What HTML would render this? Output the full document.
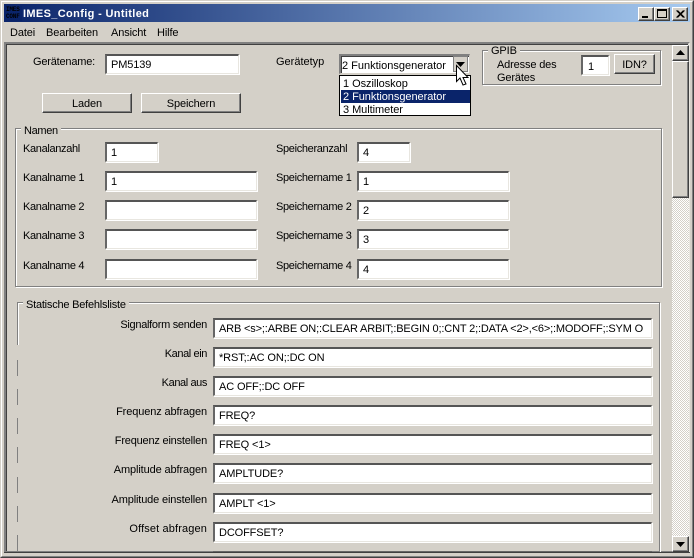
<!DOCTYPE html>
<html><head><meta charset="utf-8"><style>
html,body{margin:0;padding:0;background:#d4d0c8}
body{width:694px;height:558px;position:relative;overflow:hidden;font:11px "Liberation Sans",sans-serif;color:#000;letter-spacing:-.12px}
div{position:absolute;box-sizing:border-box;white-space:nowrap}
.l{height:14px;line-height:14px}
.n{letter-spacing:-.33px}
.r{text-align:right;width:200px;left:7px}
.i{background:#fff;height:20px;border-style:solid;border-width:2px 1px 1px 2px;border-color:#555 #e8e6e0 #e8e6e0 #666;box-shadow:1px 1px 0 #fff;padding:2px 0 0 4px;line-height:15px;overflow:hidden}
.b{background:#d4d0c8;height:20px;border:1px solid;border-color:#fff #404040 #404040 #fff;box-shadow:inset -1px -1px 0 #808080;text-align:center;line-height:20px}
.g{border:1px solid #808080;box-shadow:1px 1px 0 #fff,inset 1px 1px 0 #fff}
.t{background:#d4d0c8;padding:0 3px;height:12px;line-height:12px}
.w{width:16px;height:14px;top:7px;background:#d4d0c8;border:1px solid;border-color:#fff #404040 #404040 #fff;box-shadow:inset -1px -1px 0 #808080}
.d{left:17px;width:1px;background:#808080}
.d2{left:18px;width:1px;background:#fff}
.o{left:1px;width:129px;height:13px;line-height:14px;padding-left:2px;letter-spacing:-.05px}
</style></head><body>
<div style="left:0;top:0;width:694px;height:558px;border:1px solid;border-color:#d4d0c8 #404040 #404040 #d4d0c8"></div>
<div style="left:1px;top:1px;width:692px;height:556px;border:1px solid;border-color:#fff #808080 #808080 #fff"></div>
<div style="left:4px;top:4px;width:686px;height:18px;background:linear-gradient(90deg,#0a246a,#a6caf0)"></div>
<div style="left:6px;top:6px;width:16px;height:15px;background:#0a246a;color:#000;font:bold 6px/7px 'Liberation Mono',monospace;letter-spacing:-.2px">IMES<br>CONF</div>
<div class="l" style="left:23px;top:7px;color:#fff;font-weight:bold;font-size:11px;letter-spacing:.35px">IMES_Config - Untitled</div>
<div class="w" style="left:638px"><div style="left:3px;top:8px;width:6px;height:2px;background:#000"></div></div>
<div class="w" style="left:654px"><div style="left:2px;top:1px;width:10px;height:9px;border:1px solid #000;border-top-width:2px"></div></div>
<div class="w" style="left:672px;width:16px"><svg style="position:absolute;left:3px;top:2px" width="9" height="8"><path d="M0.5 0.5L7.5 7.5M1.5 0.5L8.5 7.5M7.5 0.5L0.5 7.5M8.5 0.5L1.500 7.5" stroke="#000" fill="none"/></svg></div>
<div class="l" style="left:10px;top:26px">Datei</div>
<div class="l" style="left:46px;top:26px">Bearbeiten</div>
<div class="l" style="left:111px;top:26px">Ansicht</div>
<div class="l" style="left:157px;top:26px">Hilfe</div>
<div style="left:4px;top:42px;width:686px;height:511px;border:2px solid;border-color:#808080 #e8e6e0 #808080 #808080;box-shadow:inset 1px 1px 0 #404040"></div>
<div style="left:4px;top:552px;width:686px;height:1px;background:#404040"></div>

<div class="l" style="left:33px;top:55px;letter-spacing:-.2px">Gerätename:</div>
<div class="i" style="left:105px;top:54px;width:134px">PM5139</div>
<div class="b" style="left:42px;top:93px;width:90px">Laden</div>
<div class="b" style="left:141px;top:93px;width:100px">Speichern</div>
<div class="l" style="left:276px;top:55px;letter-spacing:0">Gerätetyp</div>

<div class="i" style="left:339px;top:54px;width:131px;padding:3px 0 0 1px;border-color:#808080 #d4d0c8 #d4d0c8 #808080;box-shadow:inset 1px 1px 0 #404040;letter-spacing:0">2 Funktionsgenerator</div>
<div class="b" style="left:453px;top:56px;width:15px;height:16px;border-color:#808080;box-shadow:none"></div>
<svg style="position:absolute;left:456px;top:62px" width="9" height="5"><path d="M0 0H9L4.500 5Z" fill="#000"/></svg>
<div style="left:339px;top:75px;width:132px;height:41px;background:#fff;border:1px solid #000">
<div class="o" style="top:1px">1 Oszilloskop</div>
<div class="o" style="top:14px;background:#0a246a;color:#fff">2 Funktionsgenerator</div>
<div class="o" style="top:27px">3 Multimeter</div>
</div>
<svg style="position:absolute;left:455px;top:64px" width="14" height="23"><path d="M1.500 1.500V17.500L5 14L8 21L11 20L8 13.500H13Z" fill="#fff" stroke="#000"/></svg>

<div class="g" style="left:482px;top:50px;width:179px;height:35px"></div>
<div class="t" style="left:488px;top:45px">GPIB</div>
<div class="l" style="left:497px;top:58px;letter-spacing:-.15px">Adresse des</div>
<div class="l" style="left:497px;top:71px;letter-spacing:-.15px">Gerätes</div>
<div class="i" style="left:581px;top:55px;width:28px;padding-top:3px;padding-left:5px">1</div>
<div class="b" style="left:614px;top:54px;width:41px">IDN?</div>

<div class="g" style="left:15px;top:128px;width:647px;height:159px"></div>
<div class="t n" style="left:21px;top:125px">Namen</div>
<div class="l n" style="left:23px;top:142px">Kanalanzahl</div>
<div class="i" style="left:105px;top:142px;width:53px">1</div>
<div class="l n" style="left:23px;top:171px">Kanalname 1</div>
<div class="i" style="left:105px;top:171px;width:152px">1</div>
<div class="l n" style="left:23px;top:200px">Kanalname 2</div>
<div class="i" style="left:105px;top:200px;width:152px"></div>
<div class="l n" style="left:23px;top:229px">Kanalname 3</div>
<div class="i" style="left:105px;top:229px;width:152px"></div>
<div class="l n" style="left:23px;top:259px">Kanalname 4</div>
<div class="i" style="left:105px;top:259px;width:152px"></div>
<div class="l n" style="left:276px;top:142px">Speicheranzahl</div>
<div class="i" style="left:357px;top:142px;width:53px">4</div>
<div class="l n" style="left:276px;top:171px">Speichername 1</div>
<div class="i" style="left:357px;top:171px;width:152px">1</div>
<div class="l n" style="left:276px;top:200px">Speichername 2</div>
<div class="i" style="left:357px;top:200px;width:152px">2</div>
<div class="l n" style="left:276px;top:229px">Speichername 3</div>
<div class="i" style="left:357px;top:229px;width:152px">3</div>
<div class="l n" style="left:276px;top:259px">Speichername 4</div>
<div class="i" style="left:357px;top:259px;width:152px">4</div>

<div style="left:17px;top:302px;width:643px;height:250px;border-top:1px solid #808080;border-right:1px solid #808080;box-shadow:inset 0 1px 0 #fff;"></div>
<div style="left:660px;top:303px;width:1px;height:249px;background:#fff"></div>
<div class="d" style="top:302px;height:43px"></div><div class="d2" style="top:303px;height:42px"></div>
<div class="d" style="top:360px;height:16px"></div><div class="d" style="top:389px;height:16px"></div>
<div class="d" style="top:418px;height:16px"></div><div class="d" style="top:447px;height:16px"></div>
<div class="d" style="top:477px;height:16px"></div><div class="d" style="top:506px;height:16px"></div>
<div class="d" style="top:535px;height:16px"></div>
<div class="t" style="left:23px;top:299px;letter-spacing:-.22px">Statische Befehlsliste</div>
<div class="l r" style="top:318px;letter-spacing:-.3px">Signalform senden</div>
<div class="i" style="left:213px;top:318px;width:439px;letter-spacing:-.16px">ARB &lt;s&gt;;:ARBE ON;:CLEAR ARBIT;:BEGIN 0;:CNT 2;:DATA &lt;2&gt;,&lt;6&gt;;:MODOFF;:SYM O</div>
<div class="l r" style="top:347px;letter-spacing:-.4px">Kanal ein</div>
<div class="i" style="left:213px;top:347px;width:439px">*RST;:AC ON;:DC ON</div>
<div class="l r" style="top:376px;letter-spacing:-.4px">Kanal aus</div>
<div class="i" style="left:213px;top:376px;width:439px">AC OFF;:DC OFF</div>
<div class="l r" style="top:405px">Frequenz abfragen</div>
<div class="i" style="left:213px;top:405px;width:439px">FREQ?</div>
<div class="l r" style="top:434px;letter-spacing:-.2px">Frequenz einstellen</div>
<div class="i" style="left:213px;top:434px;width:439px">FREQ &lt;1&gt;</div>
<div class="l r" style="top:463px">Amplitude abfragen</div>
<div class="i" style="left:213px;top:463px;width:439px">AMPLTUDE?</div>
<div class="l r" style="top:493px;letter-spacing:-.15px">Amplitude einstellen</div>
<div class="i" style="left:213px;top:493px;width:439px">AMPLT &lt;1&gt;</div>
<div class="l r" style="top:522px;letter-spacing:.13px">Offset abfragen</div>
<div class="i" style="left:213px;top:522px;width:439px">DCOFFSET?</div>
<div style="left:213px;top:551px;width:439px;height:1px;background:#666"></div>

<div style="left:672px;top:60px;width:17px;height:476px;background:repeating-conic-gradient(#fff 0 25%,#d4d0c8 0 50%) 0 0/2px 2px"></div>
<div class="b" style="left:672px;top:45px;width:17px;height:16px"></div>
<svg style="position:absolute;left:676px;top:50px" width="9" height="5"><path d="M4.500 0L9 5H0Z" fill="#000"/></svg>
<div class="b" style="left:672px;top:61px;width:17px;height:137px"></div>
<div class="b" style="left:672px;top:536px;width:17px;height:16px"></div>
<svg style="position:absolute;left:676px;top:542px" width="9" height="5"><path d="M0 0H9L4.500 5Z" fill="#000"/></svg>
</body></html>
